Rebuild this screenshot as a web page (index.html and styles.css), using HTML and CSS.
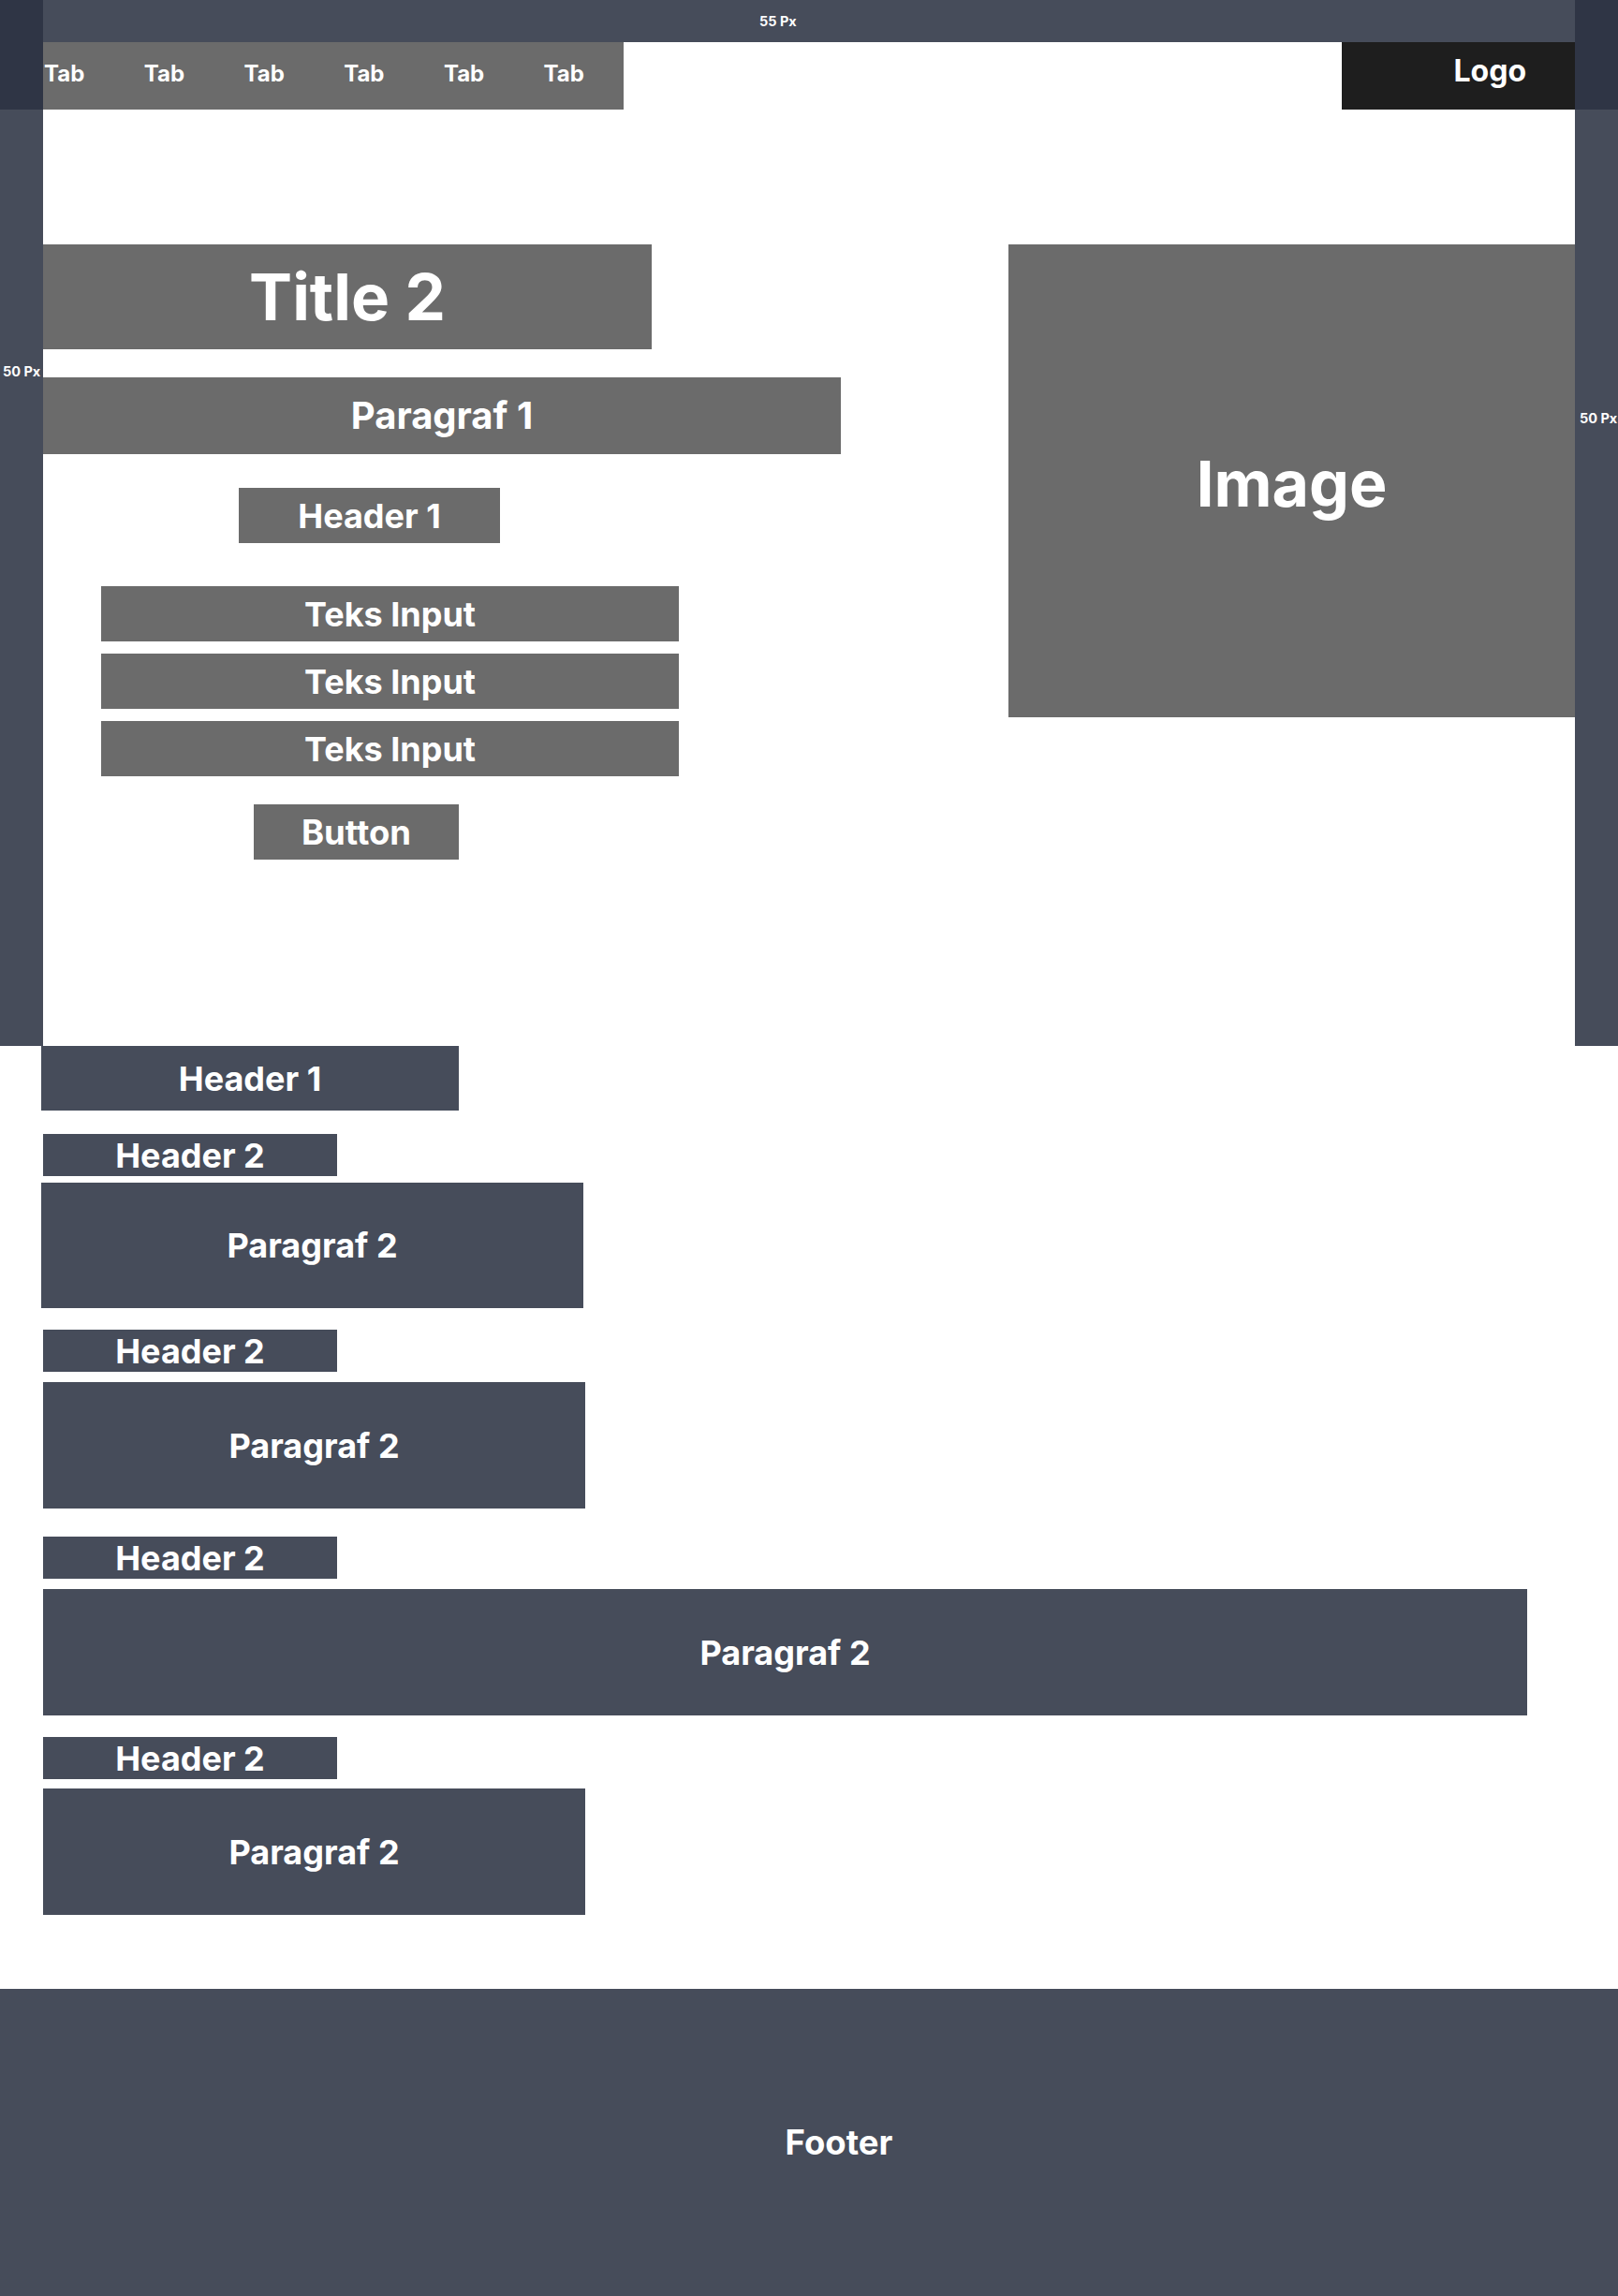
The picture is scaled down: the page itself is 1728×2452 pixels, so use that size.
FILE: index.html
```html
<!DOCTYPE html>
<html lang="id">
<head>
<meta charset="utf-8">
<title>Wireframe</title>
<link rel="stylesheet" href="styles.css">
</head>
<body>
<div class="page">
  <div class="frame">
    <aside class="rail rail-left"><span class="rail-label">50 Px</span></aside>
    <div class="main">
      <div class="topbar"><span class="topbar-label">55 Px</span></div>
      <header class="nav">
        <nav class="tabs">
          <span class="tab">Tab</span>
          <span class="tab">Tab</span>
          <span class="tab">Tab</span>
          <span class="tab">Tab</span>
          <span class="tab">Tab</span>
          <span class="tab">Tab</span>
        </nav>
        <div class="logo">Logo</div>
      </header>
      <section class="hero">
        <div class="hero-left">
          <h1 class="block title">Title 2</h1>
          <p class="block para1">Paragraf 1</p>
          <h2 class="block hero-header">Header 1</h2>
          <div class="inputs">
            <div class="block input">Teks Input</div>
            <div class="block input">Teks Input</div>
            <div class="block input">Teks Input</div>
          </div>
          <div class="block button">Button</div>
        </div>
        <div class="block image">Image</div>
      </section>
    </div>
    <aside class="rail rail-right"><span class="rail-label">50 Px</span></aside>
  </div>

  <main class="content">
    <h2 class="dblock c-header1">Header 1</h2>
    <h3 class="dblock c-header2 g1">Header 2</h3>
    <p class="dblock c-para c-para-a">Paragraf 2</p>
    <h3 class="dblock c-header2 g2">Header 2</h3>
    <p class="dblock c-para c-para-b">Paragraf 2</p>
    <h3 class="dblock c-header2 g3">Header 2</h3>
    <p class="dblock c-para c-para-wide">Paragraf 2</p>
    <h3 class="dblock c-header2 g4">Header 2</h3>
    <p class="dblock c-para c-para-c">Paragraf 2</p>
  </main>

  <footer class="footer"><span class="footer-text">Footer</span></footer>
</div>
</body>
</html>
```

FILE: styles.css
```css
* { box-sizing: border-box; }

html, body {
  margin: 0;
  padding: 0;
  background: #ffffff;
}

body {
  font-family: "Inter", "Noto Sans", "Liberation Sans", sans-serif;
  font-weight: 700;
  color: #ffffff;
}

h1, h2, h3, p { margin: 0; font-weight: 700; }

.page {
  width: 1728px;
}

/* ---------- frame with margin rails ---------- */
.frame {
  display: flex;
  height: 1117px;
}

.rail {
  width: 46px;
  flex: 0 0 46px;
  background: linear-gradient(#2f3545 0, #2f3545 117px, #464c5a 117px, #464c5a 100%);
  display: flex;
  flex-direction: column;
}

.rail-left { padding: 388px 0 0 3px; }
.rail-right { padding: 438px 0 0 5px; }

.rail-label {
  font-size: 14.5px;
  line-height: 18px;
  white-space: nowrap;
}

.main {
  flex: 1 1 auto;
  display: flex;
  flex-direction: column;
}

.topbar {
  height: 45px;
  background: #464c5a;
  display: flex;
  align-items: center;
  padding-left: 765px;
}

.topbar-label {
  font-size: 14.5px;
  line-height: 18px;
}

/* ---------- nav ---------- */
.nav {
  height: 72px;
  display: flex;
  justify-content: space-between;
}

.tabs {
  width: 620px;
  background: #6b6b6b;
  display: flex;
  align-items: center;
  gap: 63.4px;
  padding: 0 0 6px 1px;
}

.tab {
  font-size: 24px;
  line-height: 29px;
}

.logo {
  width: 249px;
  background: #1e1e1e;
  display: flex;
  align-items: center;
  justify-content: flex-end;
  padding: 0 52px 12px 0;
  font-size: 32px;
  line-height: 39px;
}

/* ---------- hero ---------- */
.hero {
  flex: 1 1 auto;
  display: flex;
  justify-content: space-between;
  align-items: flex-start;
}

.hero-left {
  display: flex;
  flex-direction: column;
  align-items: flex-start;
  padding-top: 144px;
}

.block {
  background: #6b6b6b;
  display: flex;
  align-items: center;
  justify-content: center;
  white-space: nowrap;
}

.title {
  width: 650px;
  height: 112px;
  font-size: 69px;
  line-height: 84px;
}

.para1 {
  width: 852px;
  height: 82px;
  margin-top: 30px;
  font-size: 40px;
  line-height: 48px;
}

.hero-header {
  width: 279px;
  height: 59px;
  margin: 36px 0 0 209px;
  font-size: 36px;
  line-height: 44px;
}

.inputs {
  display: flex;
  flex-direction: column;
  gap: 13px;
  margin: 46px 0 0 62px;
}

.input {
  width: 617px;
  height: 59px;
  font-size: 36px;
  line-height: 44px;
}

.button {
  width: 219px;
  height: 59px;
  margin: 30px 0 0 225px;
  font-size: 36.5px;
  line-height: 44px;
}

.image {
  width: 605px;
  height: 505px;
  margin-top: 144px;
  font-size: 68px;
  line-height: 82px;
  padding-top: 4px;
}

/* ---------- content sections ---------- */
.content {
  display: flex;
  flex-direction: column;
  align-items: flex-start;
  padding-bottom: 79px;
}

.dblock {
  background: #464c5a;
  display: flex;
  align-items: center;
  justify-content: center;
  white-space: nowrap;
  font-size: 36px;
  line-height: 44px;
}

.c-header1 {
  width: 446px;
  height: 69px;
  margin-left: 44px;
}

.c-header2 {
  width: 314px;
  height: 45px;
  margin-left: 46px;
}

.g1 { margin-top: 25px; }
.g2 { margin-top: 23px; }
.g3 { margin-top: 30px; }
.g4 { margin-top: 23px; }

.c-para {
  height: 135px;
}

.c-para-a {
  width: 579px;
  height: 134px;
  margin: 7px 0 0 44px;
}

.c-para-b {
  width: 579px;
  margin: 11px 0 0 46px;
}

.c-para-wide {
  width: 1585px;
  margin: 11px 0 0 46px;
}

.c-para-c {
  width: 579px;
  margin: 10px 0 0 46px;
}

/* ---------- footer ---------- */
.footer {
  height: 328px;
  background: #464c5a;
  display: flex;
  align-items: center;
  justify-content: center;
  padding-left: 64px;
}

.footer-text {
  font-size: 36.5px;
  line-height: 44px;
}
```
